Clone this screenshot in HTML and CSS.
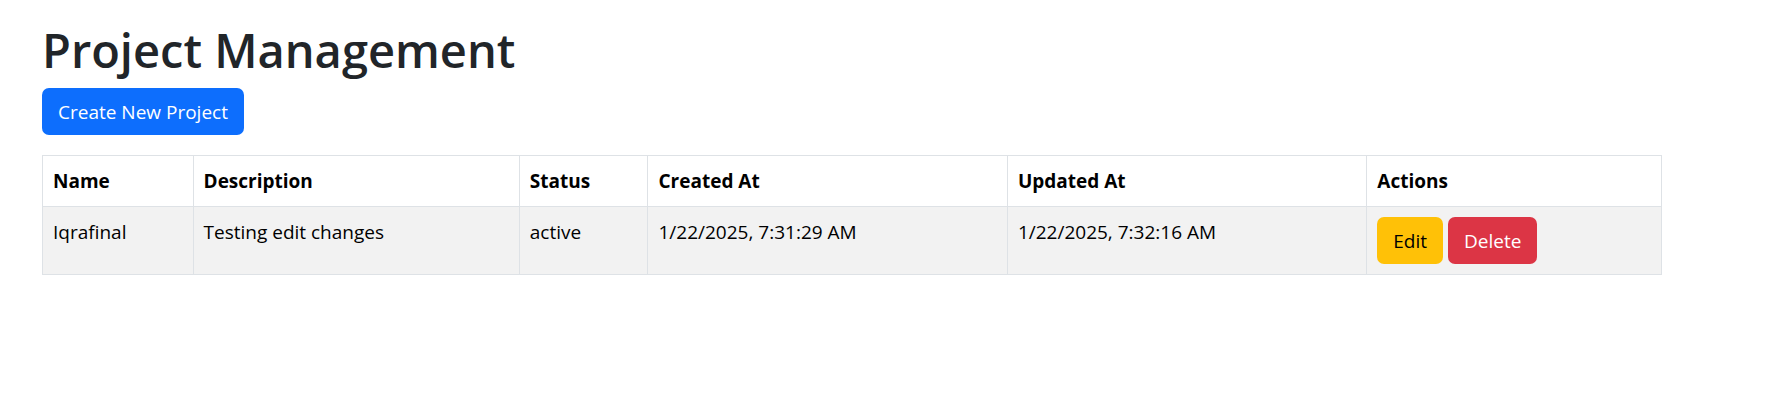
FILE: index.html
```html
<!DOCTYPE html>
<html lang="en">
<head>
<meta charset="utf-8">
<title>Project Management</title>
<link rel="stylesheet" href="styles.css">
</head>
<body>
<main class="container">
  <h1 class="title">Project Management</h1>
  <button class="btn btn-primary" type="button">Create New Project</button>
  <table class="table">
    <colgroup><col class="col-name"><col class="col-description"><col class="col-status"><col class="col-date"><col class="col-date"><col class="col-actions"></colgroup>
    <thead>
      <tr><th scope="col">Name</th><th scope="col">Description</th><th scope="col">Status</th><th scope="col">Created At</th><th scope="col">Updated At</th><th scope="col">Actions</th></tr>
    </thead>
    <tbody>
      <tr>
        <td>Iqrafinal</td><td>Testing edit changes</td><td>active</td><td>1/22/2025, 7:31:29 AM</td><td>1/22/2025, 7:32:16 AM</td>
        <td><div class="actions"><button class="btn btn-warning" type="button">Edit</button><button class="btn btn-danger" type="button">Delete</button></div></td>
      </tr>
    </tbody>
  </table>
</main>
</body>
</html>
```
FILE: styles.css
```css
* { box-sizing: border-box; }
body {
  margin: 0;
  background: #fff;
  color: #212529;
  font-family: "Segoe UI", "Open Sans", "Noto Sans", sans-serif;
  font-size: 19px;
  line-height: 30px;
}
.container {
  padding: 20px 125px 20px 42px;
}
.title {
  margin: 0 0 8px;
  font-size: 47px;
  font-weight: 600;
  line-height: 60px;
}
.btn {
  display: block;
  padding: 9px 15px 7px;
  border: 1px solid transparent;
  border-radius: 7px;
  font: inherit;
  line-height: 29px;
  white-space: nowrap;
  cursor: pointer;
}
.btn-primary { background: #0d6efd; color: #fff; }
.btn-warning { background: #ffc107; color: #000; }
.btn-danger { background: #dc3545; color: #fff; }
.table {
  width: 100%;
  margin-top: 20px;
  border-collapse: collapse;
  table-layout: fixed;
  color: #000;
}
.col-name { width: 9.3%; }
.col-description { width: 20.15%; }
.col-status { width: 7.95%; }
.col-date { width: 22.2%; }
.table th, .table td {
  padding: 10px;
  border: 1px solid #dee2e6;
  text-align: left;
  vertical-align: top;
}
.table tbody td { background: #f2f2f2; }
.actions { display: flex; gap: 5px; }
```
